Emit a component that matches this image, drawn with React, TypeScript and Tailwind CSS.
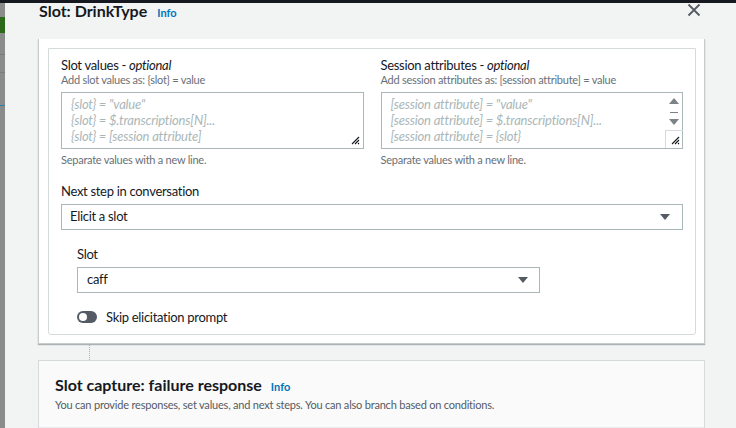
import React from "react";

const font = { fontFamily: 'Lato, "Open Sans", Arial, sans-serif' };

function Caret() {
  return (
    <svg width="12" height="8" viewBox="0 0 12 8">
      <path d="M1 1 L11 1 L6 7 Z" fill="#545b64" />
    </svg>
  );
}

function Grip() {
  return (
    <svg width="9" height="9" viewBox="0 0 9 9" className="absolute right-[3px] bottom-[3px]">
      <path d="M8 1 L1 8 M8 4 L4 8 M8 7 L7 8" stroke="#16191f" strokeWidth="1.1" />
    </svg>
  );
}

export default function App() {
  return (
    <div className="relative flex h-[428px] w-[736px] overflow-hidden bg-[#f2f3f3] text-[#16191f]" style={font}>
      <div className="absolute left-0 top-0 z-10 h-[3px] w-full bg-[#16191f]" />
      {/* backdrop strip */}
      <div className="flex w-[5px] shrink-0 flex-col bg-[#8a8c8c]">
        <div className="h-[17px]" />
        <div className="h-[16px] bg-[#2a6a1a]" />
        <div className="h-[22px] border-b border-[#7a7c7c]" />
        <div className="h-[18px] border-b border-[#7a7c7c]" />
        <div className="h-[33px] border-b border-[#2f7fa8]" />
      </div>
      <div className="flex min-w-0 flex-1 flex-col">
        {/* header */}
        <div className="flex h-[39px] shrink-0 items-start pl-[34px] pr-[35px] pt-[0px]">
          <div className="flex items-baseline gap-[10px]">
            <span className="text-[16px] font-bold leading-[22px]">Slot: DrinkType</span>
            <span className="text-[11px] font-bold text-[#0073bb]">Info</span>
          </div>
          <div className="ml-auto pt-[3px]">
            <svg width="14" height="14" viewBox="0 0 14 14">
              <path d="M1.5 1.5 L12.5 12.5 M12.5 1.5 L1.5 12.5" stroke="#545b64" strokeWidth="1.8" />
            </svg>
          </div>
        </div>
        {/* outer card */}
        <div className="ml-[33px] mr-[31px] flex flex-col">
          <div className="border-x border-b border-[#c6cbcb] bg-white pl-[9px] pr-[8px] pt-[9px] pb-[8px] shadow-[0_1px_1px_0_rgba(0,28,36,0.3)]">
            <div className="rounded-b-[3px] border border-[#d5dbdb] pl-[12px] pr-[12px] pt-[8px] pb-[9px]">
              <div className="grid grid-cols-2 gap-[17px]">
                <div>
                  <div className="text-[13px] leading-[16px] tracking-[-0.3px]">
                    Slot values - <i>optional</i>
                  </div>
                  <div className="text-[11px] leading-[14px] tracking-[-0.25px] text-[#687078]">Add slot values as: {"{slot}"} = value</div>
                  <div className="relative mt-[5px] h-[57px] border border-[#aab7b8] px-[9px] pt-[3px] text-[13px] italic leading-[16px] tracking-[-0.2px] text-[#aab7b8]">
                    <div>{'{slot} = "value"'}</div>
                    <div>{"{slot} = $.transcriptions[N]..."}</div>
                    <div>{"{slot} = [session attribute]"}</div>
                    <Grip />
                  </div>
                  <div className="mt-[4px] text-[11px] leading-[14px] tracking-[-0.25px] text-[#687078]">Separate values with a new line.</div>
                </div>
                <div>
                  <div className="text-[13px] leading-[16px] tracking-[-0.3px]">
                    Session attributes - <i>optional</i>
                  </div>
                  <div className="text-[11px] leading-[14px] tracking-[-0.25px] text-[#687078]">Add session attributes as: [session attribute] = value</div>
                  <div className="relative mt-[5px] flex h-[57px] border border-[#aab7b8]">
                    <div className="flex-1 px-[9px] pt-[3px] text-[13px] italic leading-[16px] tracking-[-0.2px] text-[#aab7b8]">
                      <div>{'[session attribute] = "value"'}</div>
                      <div>{"[session attribute] = $.transcriptions[N]..."}</div>
                      <div>{"[session attribute] = {slot}"}</div>
                    </div>
                    <div className="flex w-[17px] flex-col items-center">
                      <svg width="12" height="30" viewBox="0 0 12 30" className="mt-[3px]">
                        <path d="M1 8 L11 8 L6 2 Z" fill="#7d8287" />
                        <path d="M2 16.5 L10 16.5" stroke="#7d8287" strokeWidth="1" />
                        <path d="M1 23 L11 23 L6 29 Z" fill="#7d8287" />
                      </svg>
                      <div className="relative mt-auto h-[18px] w-[18px] border-l border-t border-[#d5dbdb]">
                        <Grip />
                      </div>
                    </div>
                  </div>
                  <div className="mt-[4px] text-[11px] leading-[14px] tracking-[-0.25px] text-[#687078]">Separate values with a new line.</div>
                </div>
              </div>
              <div className="mt-[16px] text-[13px] leading-[16px] tracking-[-0.3px]">Next step in conversation</div>
              <div className="mt-[5px] flex h-[26px] items-center border border-[#aab7b8] pl-[8px] pr-[11px] text-[13px] tracking-[-0.3px]">
                <span>Elicit a slot</span>
                <span className="ml-auto flex">
                  <Caret />
                </span>
              </div>
              <div className="pl-[16px]">
                <div className="mt-[16px] text-[13px] leading-[16px] tracking-[-0.3px]">Slot</div>
                <div className="mt-[5px] flex h-[26px] w-[463px] items-center border border-[#aab7b8] pl-[9px] pr-[10px] text-[13px] tracking-[-0.3px]">
                  <span>caff</span>
                  <span className="ml-auto flex">
                    <Caret />
                  </span>
                </div>
                <div className="mt-[16px] flex items-center gap-[9px]">
                  <div className="flex h-[12px] w-[20px] items-center rounded-full bg-[#545b64] px-[2px]">
                    <div className="h-[8px] w-[8px] rounded-full bg-white" />
                  </div>
                  <span className="text-[13px] leading-[16px] tracking-[-0.3px]">Skip elicitation prompt</span>
                </div>
              </div>
            </div>
          </div>
          {/* connector */}
          <div className="ml-[51px] h-[16px] w-0 border-l border-dotted border-[#9fb4c0]" />
          {/* second card */}
          <div className="border border-b-0 border-[#d5dbdb] bg-[#fafafa]">
            <div className="px-[16px] pt-[14px] pb-[15px]">
              <div className="flex items-baseline gap-[9px]">
                <span className="text-[16px] font-bold leading-[20px]">Slot capture: failure response</span>
                <span className="text-[11px] font-bold text-[#0073bb]">Info</span>
              </div>
              <div className="mt-[2px] text-[11px] leading-[14px] tracking-[-0.2px] text-[#545b64]">
                You can provide responses, set values, and next steps. You can also branch based on conditions.
              </div>
            </div>
            <div className="flex h-[10px] border-t border-[#eaeded] bg-white">
              <div className="ml-[50px] h-full w-0 border-l border-dotted border-[#9fb4c0]" />
            </div>
          </div>
        </div>
      </div>
    </div>
  );
}
